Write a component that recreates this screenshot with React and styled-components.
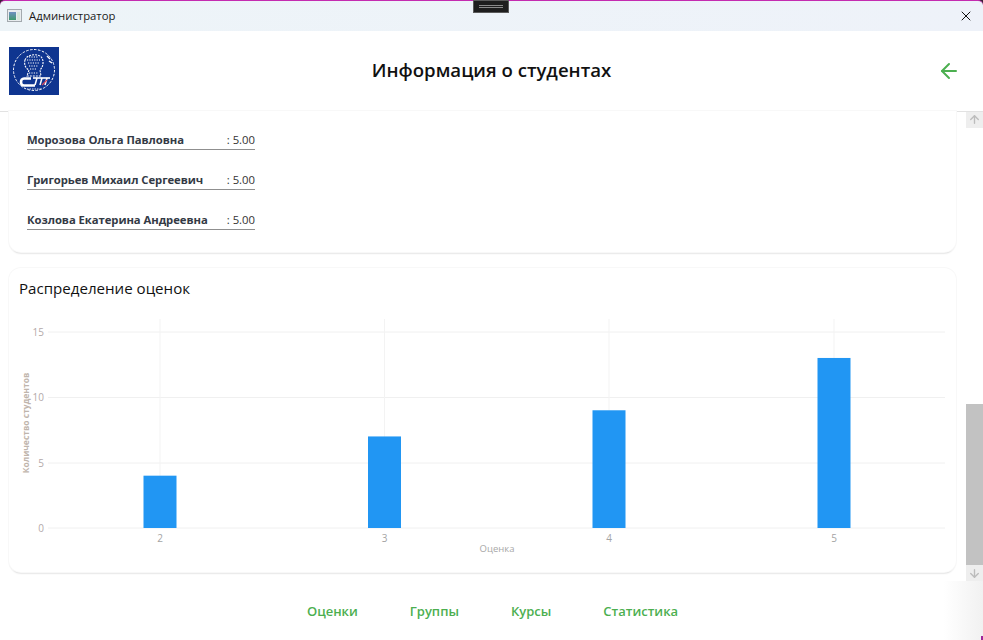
import styled, { createGlobalStyle } from 'styled-components';
import { ArrowLeft, ArrowUp, ArrowDown, X } from 'lucide-react';

const GlobalStyle = createGlobalStyle`
    html, body {
        margin: 0;
        padding: 0;
        background: #fff;
        overflow: hidden;
    }
    * {
        box-sizing: border-box;
    }
`;

const Window = styled.div`
    width: 983px;
    height: 640px;
    display: flex;
    flex-direction: column;
    font-family: "Open Sans", "Noto Sans", sans-serif;
    background: #fff;
    overflow: hidden;
`;

const TitleFrame = styled.div`
    height: 31px;
    flex: none;
    background: #3a2238;
`;

const TitleBar = styled.div`
    height: 31px;
    display: flex;
    align-items: center;
    justify-content: space-between;
    padding: 0 9px 1px 7px;
    background: linear-gradient(90deg, #edf4f8, #eef2f9);
    border-top: 1px solid #c42bb0;
    border-radius: 5px 5px 0 0;
    position: relative;
`;

const TitleGroup = styled.div`
    display: flex;
    align-items: center;
    gap: 7px;
    font-size: 11.3px;
    color: #1a1a1a;
`;

const DragHandle = styled.div`
    position: absolute;
    left: 473px;
    top: -1px;
    width: 36px;
    height: 13px;
    background: #1e1e1e;
    border: 1px solid #5a5a5a;
    display: flex;
    flex-direction: column;
    justify-content: center;
    align-items: center;
    gap: 1px;

    &::before, &::after {
        content: '';
        width: 24px;
        height: 1px;
        background: #8a8a8a;
    }
`;

const Header = styled.header`
    height: 81px;
    flex: none;
    display: flex;
    align-items: center;
    justify-content: space-between;
    padding: 0 22px 0 9px;
    border-bottom: 1px solid #e2e2e2;
    position: relative;
`;

const PageTitle = styled.h1`
    position: absolute;
    left: 0;
    right: 0;
    margin: 0;
    padding-bottom: 4px;
    text-align: center;
    font-size: 18.6px;
    font-weight: 600;
    color: #111;
`;

const Middle = styled.div`
    height: 470px;
    flex: none;
    display: flex;
    margin-top: -1px;
    position: relative;
`;

const Content = styled.main`
    flex: 1;
    display: flex;
    flex-direction: column;
    gap: 16px;
    padding: 0 10px 0 9px;
`;

const Card = styled.section`
    background: #fff;
    border-radius: 12px;
    box-shadow: 0 0 0 1px #f8f8f8, 0 2px 2px -1px rgba(0, 0, 0, 0.3);
`;

const ScoresCard = styled(Card)`
    height: 141px;
    border-radius: 0 0 12px 12px;
    padding: 18px 0 0 18px;
    display: flex;
    flex-direction: column;
    gap: 19px;
`;

const ScoreRow = styled.div`
    width: 228px;
    height: 21px;
    display: flex;
    align-items: center;
    justify-content: space-between;
    border-bottom: 1px solid #8f8f8f;
    font-size: 11.3px;
    color: #333;
`;

const ScoreName = styled.span`
    font-weight: 700;
    letter-spacing: -0.06px;
    color: #333a45;
`;

const ChartCard = styled(Card)`
    height: 304px;
    padding-top: 10px;
`;

const ChartTitle = styled.h2`
    margin: 0 0 12px 10px;
    font-size: 15.1px;
    line-height: 20px;
    font-weight: 400;
    color: #111;
`;

const ChartSvg = styled.svg`
    display: block;
`;

const Scrollbar = styled.div`
    width: 17px;
    flex: none;
    margin-top: 1px;
    display: flex;
    flex-direction: column;
    background: #fff;
`;

const ScrollButton = styled.div`
    height: 16px;
    background: #eeeeee;
    color: #bcbcbc;
    display: flex;
    align-items: center;
    justify-content: center;
`;

const ScrollThumb = styled.div`
    height: 162px;
    margin-top: 276px;
    background: #c2c2c2;
`;

const BottomNav = styled.nav`
    flex: 1;
    display: flex;
    align-items: center;
    justify-content: center;
    gap: 52px;
    padding: 1px 0 0 2px;
    background: linear-gradient(90deg, #fff 96%, #f1f1f1);
    position: relative;

    &::after {
        content: '';
        position: absolute;
        right: 0;
        bottom: 0;
        width: 2px;
        height: 4px;
        background: #a0269a;
    }
`;

const NavLink = styled.a`
    font-size: 13px;
    font-weight: 600;
    color: #4caf50;
`;

const scores = [
    { name: 'Морозова Ольга Павловна', value: ': 5.00' },
    { name: 'Григорьев Михаил Сергеевич', value: ': 5.00' },
    { name: 'Козлова Екатерина Андреевна', value: ': 5.00' },
];

// сверху вниз: значение и y линии
const yTicks = [
    { label: '15', y: 22 },
    { label: '10', y: 87.5 },
    { label: '5', y: 153 },
    { label: '0', y: 218 },
];

const bars = [
    { grade: '2', count: 4, x: 151 },
    { grade: '3', count: 7, x: 375.5 },
    { grade: '4', count: 9, x: 600 },
    { grade: '5', count: 13, x: 825 },
];

const navItems = ['Оценки', 'Группы', 'Курсы', 'Статистика'];

function WindowIcon() {
    return (
        <svg width="15" height="13" viewBox="0 0 15 13">
            <defs>
                <linearGradient id="winIcon" x1="0" y1="0" x2="0" y2="1">
                    <stop offset="0" stopColor="#6f8fc2" />
                    <stop offset="1" stopColor="#3f9a6d" />
                </linearGradient>
            </defs>
            <rect x="0.5" y="0.5" width="14" height="12" fill="#e8ecef" stroke="#a3a9ae" />
            <rect x="2" y="3" width="7" height="8" fill="url(#winIcon)" />
            <rect x="10" y="3" width="3" height="8" fill="#d6e6da" />
        </svg>
    );
}

function Logo() {
    return (
        <svg width="50" height="48" viewBox="0 0 50 48">
            <rect width="50" height="48" fill="#0f3590" />
            <circle cx="25" cy="23" r="20.5" fill="none" stroke="#fff" strokeWidth="1" strokeDasharray="2.5 1.5" />
            <path d="M16 13 C18 7 30 6 33 11 C35 15 34 20 31 23 L32 29 L18 29 L20 23 C16 21 15 17 16 13 Z" fill="none" stroke="#fff" strokeWidth="1.1" strokeDasharray="2 1" />
            <path d="M20 10 L29 10 M18 13 L31 13 M19 16 L30 16 M20 19 L29 19 M21 22 L28 22 M20 26 L29 26" stroke="#fff" strokeWidth="1.1" strokeDasharray="1.2 1.2" />
            <path d="M38 9 L41 12 M40 14 L43 16" stroke="#fff" strokeWidth="1.4" />
            <path d="M22 31.5 L15 31.5 C11 31.5 11 38.5 15 38.5 L26 38.5" fill="none" stroke="#fff" strokeWidth="2.6" />
            <path d="M24 31 L41 31" stroke="#fff" strokeWidth="1.6" />
            <path d="M28 31 L26 38 M33 31 L31 38 M38 31 L36 38" stroke="#fff" strokeWidth="1.5" />
            <path d="M33 38 L38 33" stroke="#d8475a" strokeWidth="1.2" />
            <path d="M18 42 L32 42" stroke="#fff" strokeWidth="0.8" strokeDasharray="1.5 1" />
        </svg>
    );
}

function GradeChart() {
    const axisColor = '#b3a9a9';
    return (
        <ChartSvg width="947" height="252" viewBox="0 0 947 252">
            {yTicks.map(t => (
                <line key={t.label} x1="39" x2="936" y1={t.y} y2={t.y} stroke="#f0f0f0" strokeWidth="1" />
            ))}
            {bars.map(b => (
                <line key={b.grade} x1={b.x} x2={b.x} y1="9" y2="218" stroke="#f3f3f3" strokeWidth="1" />
            ))}
            {bars.map(b => (
                <rect key={b.grade} x={b.x - 16.5} y={218 - b.count * 13.08} width="33" height={b.count * 13.08} fill="#2196f3" />
            ))}
            {yTicks.map(t => (
                <text key={t.label} x="35" y={t.y + 3.5} textAnchor="end" fontSize="10" fill={axisColor}>{t.label}</text>
            ))}
            {bars.map(b => (
                <text key={b.grade} x={b.x} y="232" textAnchor="middle" fontSize="10" fill="#a4a4a4">{b.grade}</text>
            ))}
            <text x="488" y="242" textAnchor="middle" fontSize="9.5" fill="#a8a8a8">Оценка</text>
            <text transform="translate(20 113) rotate(-90)" textAnchor="middle" fontSize="8.5" fontWeight="700" fill="#bfb5ac">Количество студентов</text>
        </ChartSvg>
    );
}

export default function App() {
    return (
        <Window>
            <GlobalStyle />
            <TitleFrame>
                <TitleBar>
                    <TitleGroup>
                        <WindowIcon />
                        Администратор
                    </TitleGroup>
                    <DragHandle />
                    <X size={16} strokeWidth={1.5} color="#111" />
                </TitleBar>
            </TitleFrame>
            <Header>
                <Logo />
                <PageTitle>Информация о студентах</PageTitle>
                <ArrowLeft size={24} strokeWidth={2} color="#4caf50" />
            </Header>
            <Middle>
                <Content>
                    <ScoresCard>
                        {scores.map(s => (
                            <ScoreRow key={s.name}>
                                <ScoreName>{s.name}</ScoreName>
                                <span>{s.value}</span>
                            </ScoreRow>
                        ))}
                    </ScoresCard>
                    <ChartCard>
                        <ChartTitle>Распределение оценок</ChartTitle>
                        <GradeChart />
                    </ChartCard>
                </Content>
                <Scrollbar>
                    <ScrollButton><ArrowUp size={13} strokeWidth={2.5} /></ScrollButton>
                    <ScrollThumb />
                    <ScrollButton><ArrowDown size={13} strokeWidth={2.5} /></ScrollButton>
                </Scrollbar>
            </Middle>
            <BottomNav>
                {navItems.map(n => <NavLink key={n}>{n}</NavLink>)}
            </BottomNav>
        </Window>
    );
}
